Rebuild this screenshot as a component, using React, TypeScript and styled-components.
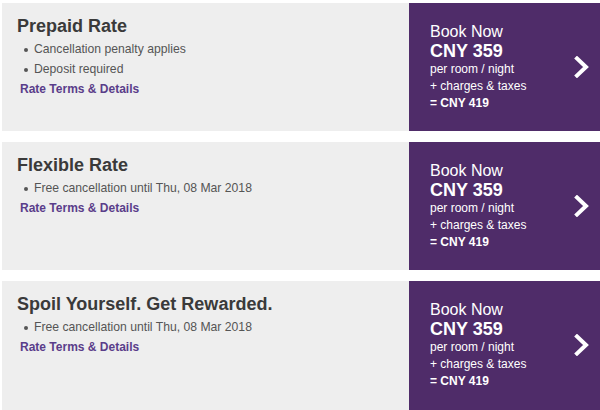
import React from 'react';
import styled, { createGlobalStyle } from 'styled-components';

const GlobalStyle = createGlobalStyle`
  html, body {
    margin: 0;
    padding: 0;
    background: #ffffff;
    overflow: hidden;
  }

  body {
    font-family: 'Liberation Sans', Arial, sans-serif;
  }
`;

interface IRate {
  title: string;
  notes: string[];
  price: string;
  total: string;
}

const rates: IRate[] = [
  {
    title: 'Prepaid Rate',
    notes: ['Cancellation penalty applies', 'Deposit required'],
    price: 'CNY 359',
    total: '= CNY 419',
  },
  {
    title: 'Flexible Rate',
    notes: ['Free cancellation until Thu, 08 Mar 2018'],
    price: 'CNY 359',
    total: '= CNY 419',
  },
  {
    title: 'Spoil Yourself. Get Rewarded.',
    notes: ['Free cancellation until Thu, 08 Mar 2018'],
    price: 'CNY 359',
    total: '= CNY 419',
  },
];

const ChevronIcon: React.FC = () => (
  <svg width="16" height="22" viewBox="0 0 16 22" aria-hidden="true">
    <path d="M3 2.5 L12 11 L3 19.5" fill="none" stroke="#ffffff" strokeWidth="4" strokeLinecap="square" strokeLinejoin="miter" />
  </svg>
);

const App: React.FC = () => (
  <>
    <GlobalStyle />
    <RateList>
      {rates.map((rate, i) => (
        <RateCard key={rate.title} $last={i === rates.length - 1}>
          <RateInfo>
            <RateTitle>{rate.title}</RateTitle>
            <NoteList>
              {rate.notes.map((note) => (
                <Note key={note}>{note}</Note>
              ))}
            </NoteList>
            <TermsLink href="#">Rate Terms &amp; Details</TermsLink>
          </RateInfo>

          <BookPanel>
            <PriceBlock>
              <BookLabel>Book Now</BookLabel>
              <Price>{rate.price}</Price>
              <PriceNote>per room / night</PriceNote>
              <PriceNote>+ charges &amp; taxes</PriceNote>
              <PriceTotal>{rate.total}</PriceTotal>
            </PriceBlock>
            <ChevronWrap>
              <ChevronIcon />
            </ChevronWrap>
          </BookPanel>
        </RateCard>
      ))}
    </RateList>
  </>
);

export default App;

const RateList = styled.div`
  display: flex;
  flex-direction: column;
  gap: 11px;
  padding: 3px 0 0 2px;
  width: 598px;
`;

interface IRateCardProps {
  $last?: boolean;
}

const RateCard = styled.div<IRateCardProps>`
  display: flex;
  height: ${({ $last }) => ($last ? '140px' : '128px')};
  background: #eeeeee;
  flex-shrink: 0;
`;

const RateInfo = styled.div`
  flex: 1;
  padding: 12px 0 0 15px;
  color: #555555;
`;

const RateTitle = styled.h3`
  margin: 0;
  font-size: 18px;
  line-height: 22px;
  font-weight: bold;
  color: #3a3a3a;
`;

const NoteList = styled.ul`
  list-style: none;
  margin: 2px 0 0;
  padding: 0 0 0 17px;
`;

const Note = styled.li`
  position: relative;
  font-size: 12.2px;
  line-height: 20px;
  color: #555555;

  &::before {
    content: '';
    position: absolute;
    left: -10px;
    top: 9px;
    width: 4px;
    height: 4px;
    border-radius: 50%;
    background: #555555;
  }
`;

const TermsLink = styled.a`
  display: block;
  margin-left: 3px;
  font-size: 12px;
  line-height: 20px;
  font-weight: bold;
  color: #5a3d8a;
  text-decoration: none;
`;

const BookPanel = styled.div`
  display: flex;
  align-items: flex-start;
  justify-content: space-between;
  width: 191px;
  box-sizing: border-box;
  padding: 19px 10px 0 21px;
  background: #4f2c69;
  color: #ffffff;
`;

const PriceBlock = styled.div`
  display: flex;
  flex-direction: column;
`;

const BookLabel = styled.span`
  font-size: 16px;
  line-height: 19px;
`;

const Price = styled.span`
  font-size: 18px;
  line-height: 20px;
  font-weight: bold;
`;

const PriceNote = styled.span`
  font-size: 12px;
  line-height: 17px;
`;

const PriceTotal = styled.span`
  font-size: 12px;
  line-height: 17px;
  font-weight: bold;
`;

const ChevronWrap = styled.div`
  display: flex;
  margin-top: 34px;
`;
